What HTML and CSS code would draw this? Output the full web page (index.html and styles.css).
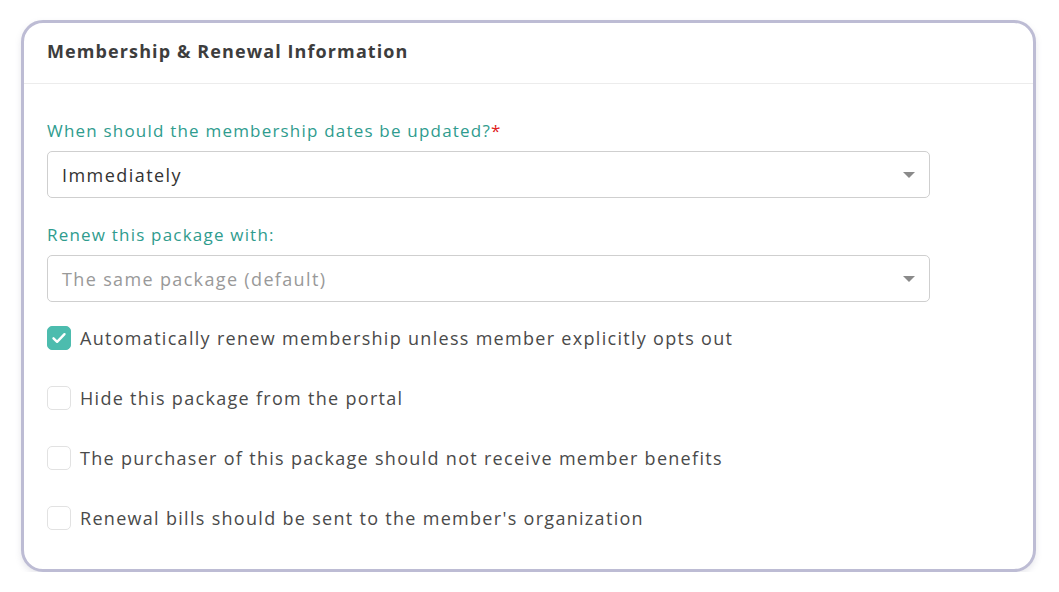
FILE: index.html
```html
<!DOCTYPE html>
<html lang="en">
<head>
<meta charset="utf-8">
<title>Membership &amp; Renewal Information</title>
<link rel="stylesheet" href="styles.css">
</head>
<body>
<section class="card">
  <header class="card-header">
    <h2 class="card-title">Membership &amp; Renewal Information</h2>
  </header>
  <div class="card-body">
    <div class="field">
      <label class="field-label">When should the membership dates be updated?<span class="req">*</span></label>
      <div class="select">
        <span class="select-value">Immediately</span>
        <span class="caret"></span>
      </div>
    </div>
    <div class="field field-second">
      <label class="field-label">Renew this package with:</label>
      <div class="select">
        <span class="select-value placeholder">The same package (default)</span>
        <span class="caret"></span>
      </div>
    </div>
    <ul class="checks">
      <li class="check-row">
        <span class="box checked">
          <svg viewBox="0 0 24 24" width="24" height="24"><path d="M6.5 12.3l3.6 3.5 7.4-7.6" fill="none" stroke="#fff" stroke-width="2.4" stroke-linecap="round" stroke-linejoin="round"/></svg>
        </span>
        <span class="check-text">Automatically renew membership unless member explicitly opts out</span>
      </li>
      <li class="check-row">
        <span class="box"></span>
        <span class="check-text">Hide this package from the portal</span>
      </li>
      <li class="check-row">
        <span class="box"></span>
        <span class="check-text">The purchaser of this package should not receive member benefits</span>
      </li>
      <li class="check-row">
        <span class="box"></span>
        <span class="check-text">Renewal bills should be sent to the member's organization</span>
      </li>
    </ul>
  </div>
</section>
</body>
</html>
```

FILE: styles.css
```css
* { box-sizing: border-box; }
html, body { margin: 0; padding: 0; background: #fff; }
body {
  font-family: "Open Sans", "Liberation Sans", sans-serif;
  color: #444;
  padding: 20px 0 0 21px;
}
.card {
  width: 1015px;
  height: 552px;
  border: 3px solid #bdbcd4;
  border-radius: 22px;
  background: #fff;
  box-shadow: 0 3px 6px rgba(120, 120, 150, 0.18);
  display: flex;
  flex-direction: column;
}
.card-header {
  height: 61px;
  border-bottom: 1px solid #ececec;
  display: flex;
  align-items: center;
  padding: 0 23px 5px;
}
.card-title {
  margin: 0;
  font-size: 18px;
  font-weight: 700;
  color: #3d3d3d;
  letter-spacing: 1.1px;
}
.card-body {
  padding: 37px 23px 0;
  display: flex;
  flex-direction: column;
}
.field { display: flex; flex-direction: column; gap: 10px; width: 883px; }
.field-second { margin-top: 27px; }
.field-label {
  font-size: 17px;
  line-height: 20px;
  color: #2f9c8e;
  letter-spacing: 1.2px;
}
.req { color: #e02020; letter-spacing: 0; }
.select {
  height: 47px;
  border: 1px solid #cfcfcf;
  border-radius: 5px;
  display: flex;
  align-items: center;
  justify-content: space-between;
  padding: 0 14px 0 14px;
}
.select-value {
  font-size: 18px;
  color: #333;
  letter-spacing: 1.45px;
}
.select-value.placeholder { color: #999; letter-spacing: 1.35px; }
.caret {
  width: 0;
  height: 0;
  border-left: 6px solid transparent;
  border-right: 6px solid transparent;
  border-top: 6px solid #8a8a8a;
}
.checks {
  list-style: none;
  margin: 24px 0 0;
  padding: 0;
  display: flex;
  flex-direction: column;
  gap: 36px;
}
.check-row {
  display: flex;
  align-items: center;
  gap: 9px;
  height: 24px;
}
.box {
  width: 24px;
  height: 24px;
  border: 1px solid #e2e2e2;
  border-radius: 5px;
  flex: none;
  display: flex;
}
.box.checked {
  background: #4cbcae;
  border-color: #4cbcae;
}
.box.checked svg { margin: -1px; }
.check-text {
  font-size: 18px;
  color: #4a4a4a;
  letter-spacing: 1.3px;
}
```
